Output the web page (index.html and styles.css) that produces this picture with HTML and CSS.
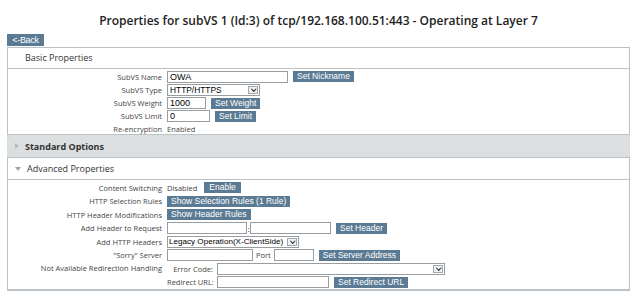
FILE: index.html
```html
<!DOCTYPE html>
<html lang="en">
<head>
    <meta charset="UTF-8">
    <title>SubVS Properties</title>
    <link rel="stylesheet" href="styles.css">
</head>
<body>
    <h2 class="page-title">Properties for subVS 1 (Id:3) of tcp/192.168.100.51:443 - Operating at Layer 7</h2>

    <div class="back-row"><button class="btn back">&lt;-Back</button></div>

    <!-- basic -->
    <div class="section basic">
        <div class="section-head">Basic Properties</div>
        <div class="rows">
            <div class="row">
                <div class="lbl">SubVS Name</div>
                <div class="val"><input class="txt w-name" value="OWA"><button class="btn">Set Nickname</button></div>
            </div>
            <div class="row">
                <div class="lbl">SubVS Type</div>
                <div class="val"><span class="sel w-type">HTTP/HTTPS<span class="arrow"></span></span></div>
            </div>
            <div class="row">
                <div class="lbl">SubVS Weight</div>
                <div class="val"><input class="txt w-weight" value="1000"><button class="btn">Set Weight</button></div>
            </div>
            <div class="row">
                <div class="lbl">SubVS Limit</div>
                <div class="val"><input class="txt w-limit" value="0"><button class="btn">Set Limit</button></div>
            </div>
            <div class="row last">
                <div class="lbl">Re-encryption</div>
                <div class="val"><span class="plain">Enabled</span></div>
            </div>
        </div>
    </div>

    <div class="collapsed">
        <span class="tri-right"></span>Standard Options
    </div>

    <!-- advanced -->
    <div class="section adv">
        <div class="section-head"><span class="tri-down"></span>Advanced Properties</div>
        <div class="rows">
            <div class="row">
                <div class="lbl">Content Switching</div>
                <div class="val"><span class="plain">Disabled</span><button class="btn wide gap-l">Enable</button></div>
            </div>
            <div class="row">
                <div class="lbl">HTTP Selection Rules</div>
                <div class="val"><button class="btn first">Show Selection Rules (1 Rule)</button></div>
            </div>
            <div class="row">
                <div class="lbl">HTTP Header Modifications</div>
                <div class="val"><button class="btn first">Show Header Rules</button></div>
            </div>
            <div class="row">
                <div class="lbl">Add Header to Request</div>
                <div class="val"><input class="txt w-hdr"><span class="colon">:</span><input class="txt w-hdr2"><button class="btn">Set Header</button></div>
            </div>
            <div class="row">
                <div class="lbl">Add HTTP Headers</div>
                <div class="val"><span class="sel w-legacy">Legacy Operation(X-ClientSide)<span class="arrow"></span></span></div>
            </div>
            <div class="row">
                <div class="lbl">"Sorry" Server</div>
                <div class="val"><input class="txt w-sorry"><span class="plain port">Port</span><input class="txt w-port"><button class="btn">Set Server Address</button></div>
            </div>
            <div class="row tall">
                <div class="lbl">Not Available Redirection Handling</div>
                <div class="sub">
                    <div class="subrow">
                        <div class="sub-lbl">Error Code:</div>
                        <div class="val"><span class="sel w-error"><span class="arrow"></span></span></div>
                    </div>
                    <div class="subrow">
                        <div class="sub-lbl">Redirect URL:</div>
                        <div class="val"><input class="txt w-url"><button class="btn">Set Redirect URL</button></div>
                    </div>
                </div>
            </div>
        </div>
    </div>
</body>
</html>
```

FILE: styles.css
```css
body {
    margin: 0;
    padding: 0 10px 0 7px;
    font-family: "Open Sans", "Noto Sans", sans-serif;
    font-size: 7.5px;
    color: #444;
    background: #fff;
}

.page-title {
    margin: 0;
    padding-top: 13px;
    height: 21px;
    line-height: 16px;
    text-align: center;
    font-size: 12px;
    font-weight: 600;
    color: #222;
}

.back-row {
    height: 13px;
    display: flex;
    align-items: flex-start;
}

/* buttons */
.btn {
    font-family: "Liberation Sans", Arial, sans-serif;
    font-size: 8.5px;
    line-height: 11px;
    height: 11px;
    padding: 0 4px;
    margin: 0 0 0 5px;
    border: none;
    border-radius: 0;
    background: #5b7a93;
    color: #fff;
    white-space: nowrap;
    flex: none;
}

.btn.back {
    margin: 0;
    height: 12px;
    line-height: 12px;
    width: 37px;
    padding: 0;
    font-size: 9px;
    letter-spacing: -0.3px;
}

.btn.first {
    margin-left: 0;
}

.btn.wide {
    padding: 0 5px;
}

.btn.gap-l {
    margin-left: 7px;
}

/* boxes */
.section {
    border: 1px solid #bac1c7;
}

.section-head {
    height: 20px;
    line-height: 20px;
    padding-left: 17px;
    font-size: 9px;
    color: #333;
    border-bottom: 1px solid #bac1c7;
}

.rows {
    padding-top: 1px;
}

.row {
    display: grid;
    grid-template-columns: 154px 1fr;
    column-gap: 5px;
    align-items: center;
    height: 13.25px;
}

.basic .row.last {
    height: 11px;
}

.adv .row {
    height: 13.5px;
}

.adv .row.tall {
    height: auto;
    align-items: start;
}

.lbl {
    text-align: right;
    white-space: nowrap;
    color: #444;
}

.tall .lbl {
    line-height: 13.5px;
}

.val {
    display: flex;
    align-items: center;
    min-width: 0;
}

.plain {
    color: #444;
    white-space: nowrap;
}

.plain.port {
    margin: 0 3px;
}

.colon {
    width: 3px;
    font-size: 8px;
    text-align: center;
    color: #333;
}

/* inputs */
.txt {
    box-sizing: border-box;
    height: 12px;
    margin: 0;
    padding: 0 2px;
    border: 1px solid #989da2;
    font-family: "Liberation Sans", Arial, sans-serif;
    font-size: 9px;
    color: #000;
    flex: none;
}

.w-name { width: 121px; }
.w-weight { width: 39px; }
.w-limit { width: 43px; }
.w-hdr { width: 80px; }
.w-hdr2 { width: 81px; }
.w-sorry { width: 86px; }
.w-port { width: 40px; }
.w-url { width: 112px; }

.sel {
    position: relative;
    display: block;
    box-sizing: border-box;
    height: 12px;
    line-height: 10px;
    padding: 0 12px 0 2px;
    border: 1px solid #989da2;
    font-family: "Liberation Sans", Arial, sans-serif;
    font-size: 8.4px;
    color: #000;
    white-space: nowrap;
    overflow: hidden;
    flex: none;
}

.w-type { width: 93px; }
.w-error { width: 228px; }

.w-legacy {
    width: 132px;
    font-size: 8.1px;
    padding-left: 1px;
}

.arrow {
    position: absolute;
    right: 1px;
    top: 1px;
    width: 10px;
    height: 8px;
    border: 1px solid #a3a8ad;
    box-sizing: border-box;
    background: #eef0f2;
}

.arrow::after {
    content: "";
    position: absolute;
    left: 2.5px;
    top: 0;
    width: 2.5px;
    height: 2.5px;
    border-right: 1px solid #222;
    border-bottom: 1px solid #222;
    transform: rotate(45deg);
}

/* collapsed section */
.collapsed {
    display: flex;
    align-items: center;
    height: 22px;
    padding-left: 8px;
    background: #dcdfe0;
    border-bottom: 1px solid #bac1c7;
    font-size: 9px;
    font-weight: 700;
    color: #333;
}

.tri-right {
    width: 0;
    height: 0;
    border-top: 3px solid transparent;
    border-bottom: 3px solid transparent;
    border-left: 4px solid #b6bbbf;
    margin-right: 6px;
}

.adv {
    border-top: none;
    border-bottom-width: 2px;
}

.adv .section-head {
    padding-left: 7px;
    display: flex;
    align-items: center;
    height: 21px;
}

.tri-down {
    width: 0;
    height: 0;
    border-left: 3.5px solid transparent;
    border-right: 3.5px solid transparent;
    border-top: 4px solid #a0a5aa;
    margin-right: 6px;
}

/* redirect sub-form */
.subrow {
    display: grid;
    grid-template-columns: 46px 1fr;
    column-gap: 4px;
    align-items: center;
    height: 13.5px;
}

.sub-lbl {
    text-align: right;
    white-space: nowrap;
    color: #444;
}
```
